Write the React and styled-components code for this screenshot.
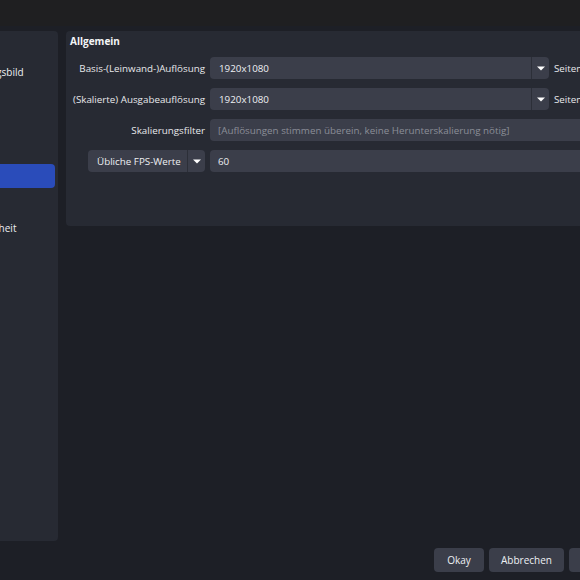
import React from "react";
import styled, { createGlobalStyle } from "styled-components";

const GlobalStyle = createGlobalStyle`
  html, body {
    margin: 0;
    padding: 0;
    background: #1d1f26;
    overflow: hidden;
  }
  body {
    font-family: "Open Sans", "Noto Sans", sans-serif;
    font-size: 9.8px;
    color: #e8e9ec;
  }
`;

const categories = [
  "Allgemein",
  "Erweiterungsbild",
  "Stream",
  "Ausgabe",
  "Audio",
  "Video",
  "Hotkeys",
  "Barrierefreiheit",
  "Erweitert",
];

const Caret = () => (
  <svg width="8" height="5" viewBox="0 0 8 5">
    <path d="M0 0.5 H8 L4 4.5 Z" fill="#ffffff" />
  </svg>
);

const Combo = ({ value, width }) => (
  <ComboBox $width={width}>
    <ComboValue>{value}</ComboValue>
    <ComboArrow>
      <Caret />
    </ComboArrow>
  </ComboBox>
);

export default function App() {
  return (
    <>
      <GlobalStyle />
      <Window>
        <TitleBar />
        <Body>
          <Sidebar>
            {categories.map((c) => (
              <NavItem key={c} $active={c === "Video"}>
                {c}
              </NavItem>
            ))}
          </Sidebar>
          <Main>
            <Group>
              <GroupTitle>Allgemein</GroupTitle>
              <Form>
                <Label>Basis-(Leinwand-)Auflösung</Label>
                <Combo value="1920x1080" />
                <Aspect>Seitenverhältnis 16:9</Aspect>

                <Label>(Skalierte) Ausgabeauflösung</Label>
                <Combo value="1920x1080" />
                <Aspect>Seitenverhältnis 16:9</Aspect>

                <Label>Skalierungsfilter</Label>
                <Field $wide $muted>
                  [Auflösungen stimmen überein, keine Herunterskalierung nötig]
                </Field>

                <LabelCell>
                  <Combo value="Übliche FPS-Werte" width="117px" />
                </LabelCell>
                <Field $wide>60</Field>
              </Form>
            </Group>
          </Main>
        </Body>
        <Footer>
          <Button $w="50px">Okay</Button>
          <Button $w="75px">Abbrechen</Button>
          <Button $w="85px">Übernehmen</Button>
        </Footer>
      </Window>
    </>
  );
}

const Window = styled.div`
  width: 664px;
  height: 580px;
  display: flex;
  flex-direction: column;
`;

const TitleBar = styled.div`
  height: 26px;
  background: #1f1f21;
  flex-shrink: 0;
`;

const Body = styled.div`
  display: flex;
  gap: 8px;
  margin-top: 5px;
  height: 510px;
`;

const Sidebar = styled.div`
  width: 200px;
  margin-left: -142px;
  flex-shrink: 0;
  background: #272a33;
  border-radius: 4px;
  padding: 3px 3px 0 0;
  box-sizing: border-box;
  display: flex;
  flex-direction: column;
  gap: 2px;
`;

const NavItem = styled.div`
  height: 24px;
  display: flex;
  align-items: center;
  padding-left: 87px;
  border-radius: 4px;
  font-size: 10px;
  color: #eceef2;
  background: ${(p) => (p.$active ? "#2a4cba" : "transparent")};
`;

const Main = styled.div`
  flex: 1;
  display: flex;
  flex-direction: column;
`;

const Group = styled.div`
  height: 195px;
  background: #272a33;
  border-radius: 4px;
  padding: 3px 8px 0 4px;
  box-sizing: border-box;
`;

const GroupTitle = styled.div`
  font-weight: 700;
  font-size: 10px;
  color: #f4f5f7;
  line-height: 14px;
`;

const Form = styled.div`
  display: grid;
  grid-template-columns: 135px 339px 1fr;
  column-gap: 5px;
  row-gap: 9px;
  margin-top: 9px;
  grid-auto-rows: 22px;
  align-items: center;
`;

const Label = styled.div`
  text-align: right;
  white-space: nowrap;
  color: #e8e9ec;
`;

const LabelCell = styled.div`
  display: flex;
  justify-content: flex-end;
  height: 22px;
`;

const Aspect = styled.div`
  white-space: nowrap;
  color: #e8e9ec;
`;

const ComboBox = styled.div`
  width: ${(p) => p.$width || "auto"};
  height: 22px;
  box-sizing: border-box;
  display: flex;
  background: #3b3e4a;
  border-radius: 4px;
  overflow: hidden;
`;

const ComboValue = styled.div`
  flex: 1;
  display: flex;
  align-items: center;
  padding-left: 9px;
  white-space: nowrap;
  color: #eef0f3;
`;

const ComboArrow = styled.div`
  width: 17px;
  border-left: 1px solid #2c2f38;
  display: flex;
  align-items: center;
  justify-content: center;
`;

const Field = styled.div`
  grid-column: ${(p) => (p.$wide ? "2 / 4" : "auto")};
  height: 22px;
  display: flex;
  align-items: center;
  padding-left: 8px;
  box-sizing: border-box;
  border-radius: 4px;
  background: #3b3e4a;
  white-space: nowrap;
  color: ${(p) => (p.$muted ? "#8b8e98" : "#eef0f3")};
`;

const Footer = styled.div`
  display: flex;
  justify-content: flex-end;
  gap: 5px;
  margin-top: 7px;
  padding-right: 10px;
`;

const Button = styled.div`
  width: ${(p) => p.$w};
  height: 24px;
  border-radius: 4px;
  background: #3b3e4a;
  display: flex;
  align-items: center;
  justify-content: center;
  color: #eef0f3;
  font-size: 10px;
`;
